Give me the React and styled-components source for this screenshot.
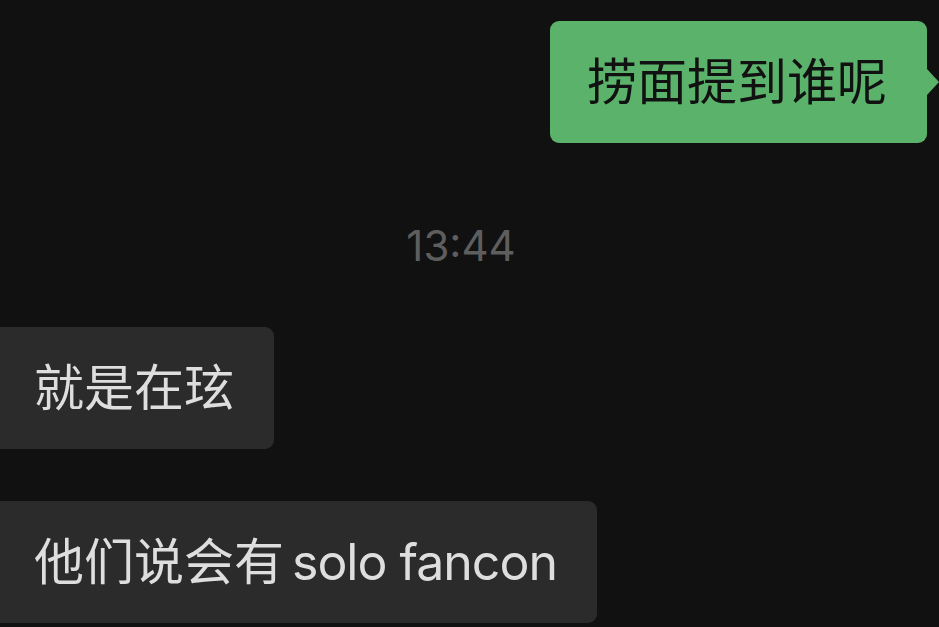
import React from "react";
import styled, { createGlobalStyle } from "styled-components";

const Global = createGlobalStyle`
  html, body { margin: 0; padding: 0; background: #111111; }
  body { width: 939px; height: 627px; overflow: hidden; font-family: Inter, "Noto Sans CJK SC", sans-serif; }
`;

const Chat = styled.div`
  display: flex;
  flex-direction: column;
  padding-top: 21px;
  width: 939px;
  height: 627px;
  box-sizing: border-box;
  overflow: hidden;
`;

const Row = styled.div`
  display: flex;
  justify-content: ${(p) => (p.$mine ? "flex-end" : "flex-start")};
  padding-right: ${(p) => (p.$mine ? "12px" : "0")};
  margin-top: ${(p) => p.$gap || 0}px;
`;

const Bubble = styled.div`
  position: relative;
  box-sizing: border-box;
  height: 122px;
  display: flex;
  align-items: center;
  font-size: 50px;
  line-height: 1;
  border-radius: 9px;
  white-space: nowrap;
  background: ${(p) => (p.$mine ? "#5bb26b" : "#2b2b2b")};
  color: ${(p) => (p.$mine ? "#111111" : "#dedede")};
  padding: 0 40px 0 ${(p) => (p.$mine ? "37px" : "34px")};
  ${(p) => !p.$mine && "border-top-left-radius: 0; border-bottom-left-radius: 0;"}

  ${(p) =>
    p.$mine &&
    `
    &::after {
      content: "";
      position: absolute;
      right: -12px;
      top: 50%;
      margin-top: -13px;
      border-style: solid;
      border-width: 13px 0 13px 12px;
      border-color: transparent transparent transparent #5bb26b;
    }
  `}
`;

const Latin = styled.span`
  margin-left: ${(p) => p.$gap}px;
  letter-spacing: -1px;
`;

const Time = styled.div`
  margin-top: 81px;
  height: 44px;
  line-height: 44px;
  text-align: center;
  font-size: 42px;
  color: #5e5e5e;
  padding-right: 17px;
`;

export default function App() {
  return (
    <>
      <Global />
      <Chat>
        <Row $mine>
          <Bubble $mine>捞面提到谁呢</Bubble>
        </Row>
        <Time>13:44</Time>
        <Row $gap={59}>
          <Bubble>就是在玹</Bubble>
        </Row>
        <Row $gap={52}>
          <Bubble>
            他们说会有<Latin $gap={8}>solo fancon</Latin>
          </Bubble>
        </Row>
      </Chat>
    </>
  );
}
